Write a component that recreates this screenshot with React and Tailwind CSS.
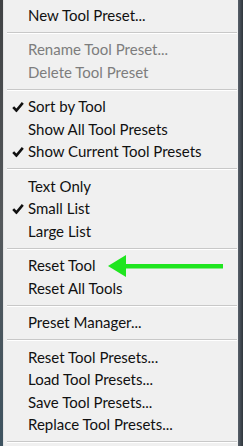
import React from 'react'

const groups = [
  [{ label: 'New Tool Preset...' }],
  [
    { label: 'Rename Tool Preset...', disabled: true },
    { label: 'Delete Tool Preset', disabled: true },
  ],
  [
    { label: 'Sort by Tool', checked: true },
    { label: 'Show All Tool Presets' },
    { label: 'Show Current Tool Presets', checked: true },
  ],
  [
    { label: 'Text Only' },
    { label: 'Small List', checked: true },
    { label: 'Large List' },
  ],
  [{ label: 'Reset Tool', arrow: true }, { label: 'Reset All Tools' }],
  [{ label: 'Preset Manager...' }],
  [
    { label: 'Reset Tool Presets...' },
    { label: 'Load Tool Presets...' },
    { label: 'Save Tool Presets...' },
    { label: 'Replace Tool Presets...' },
  ],
]

const Check = () => (
  <svg width="12" height="11" viewBox="0 0 12 11" className="absolute left-[8px] top-1/2 -translate-y-1/2">
    <path d="M1.2 5.6 L4.4 9 L10.8 1.4" fill="none" stroke="#111" strokeWidth="2.6" strokeLinejoin="miter" />
  </svg>
)

const Arrow = () => (
  <svg width="120" height="26" viewBox="0 0 120 26" className="absolute left-[100px] top-1/2 -translate-y-1/2">
    <polygon points="4,13 22,2 22,24" fill="#1fe51f" />
    <rect x="20" y="11" width="99" height="4.5" fill="#1fe51f" />
  </svg>
)

const Item = ({ label, disabled, checked, arrow }) => (
  <div className="relative h-[22.5px] flex items-center pl-[24px]">
    {checked && <Check />}
    <span className={disabled ? 'text-[#7d7d7d]' : 'text-[#111]'}>{label}</span>
    {arrow && <Arrow />}
  </div>
)

const Separator = () => (
  <div className="h-[12px] flex flex-col justify-center pl-[3px] pr-px">
    <div className="h-px bg-[#c8c8c8]" />
    <div className="h-px bg-white" />
  </div>
)

export default function App() {
  return (
    <div className="w-[243px] h-[446px] flex overflow-hidden bg-[#3b4247]">
      <div className="w-[3px] bg-gradient-to-b from-[#404244] via-[#55595c] to-[#3e5360]" />
      <div
        className="w-[235px] bg-[#f0f0f0] border-l border-[#e4e4e4] pt-[4px] text-[15px] leading-none"
        style={{ fontFamily: 'Lato, "Noto Sans", sans-serif' }}
      >
        {groups.map((g, i) => (
          <div key={i}>
            {i > 0 && <Separator />}
            {g.map((it) => (
              <Item key={it.label} {...it} />
            ))}
          </div>
        ))}
        <Separator />
      </div>
      <div className="flex-1 bg-gradient-to-r from-[#58606a] to-[#2f363c]" />
    </div>
  )
}
